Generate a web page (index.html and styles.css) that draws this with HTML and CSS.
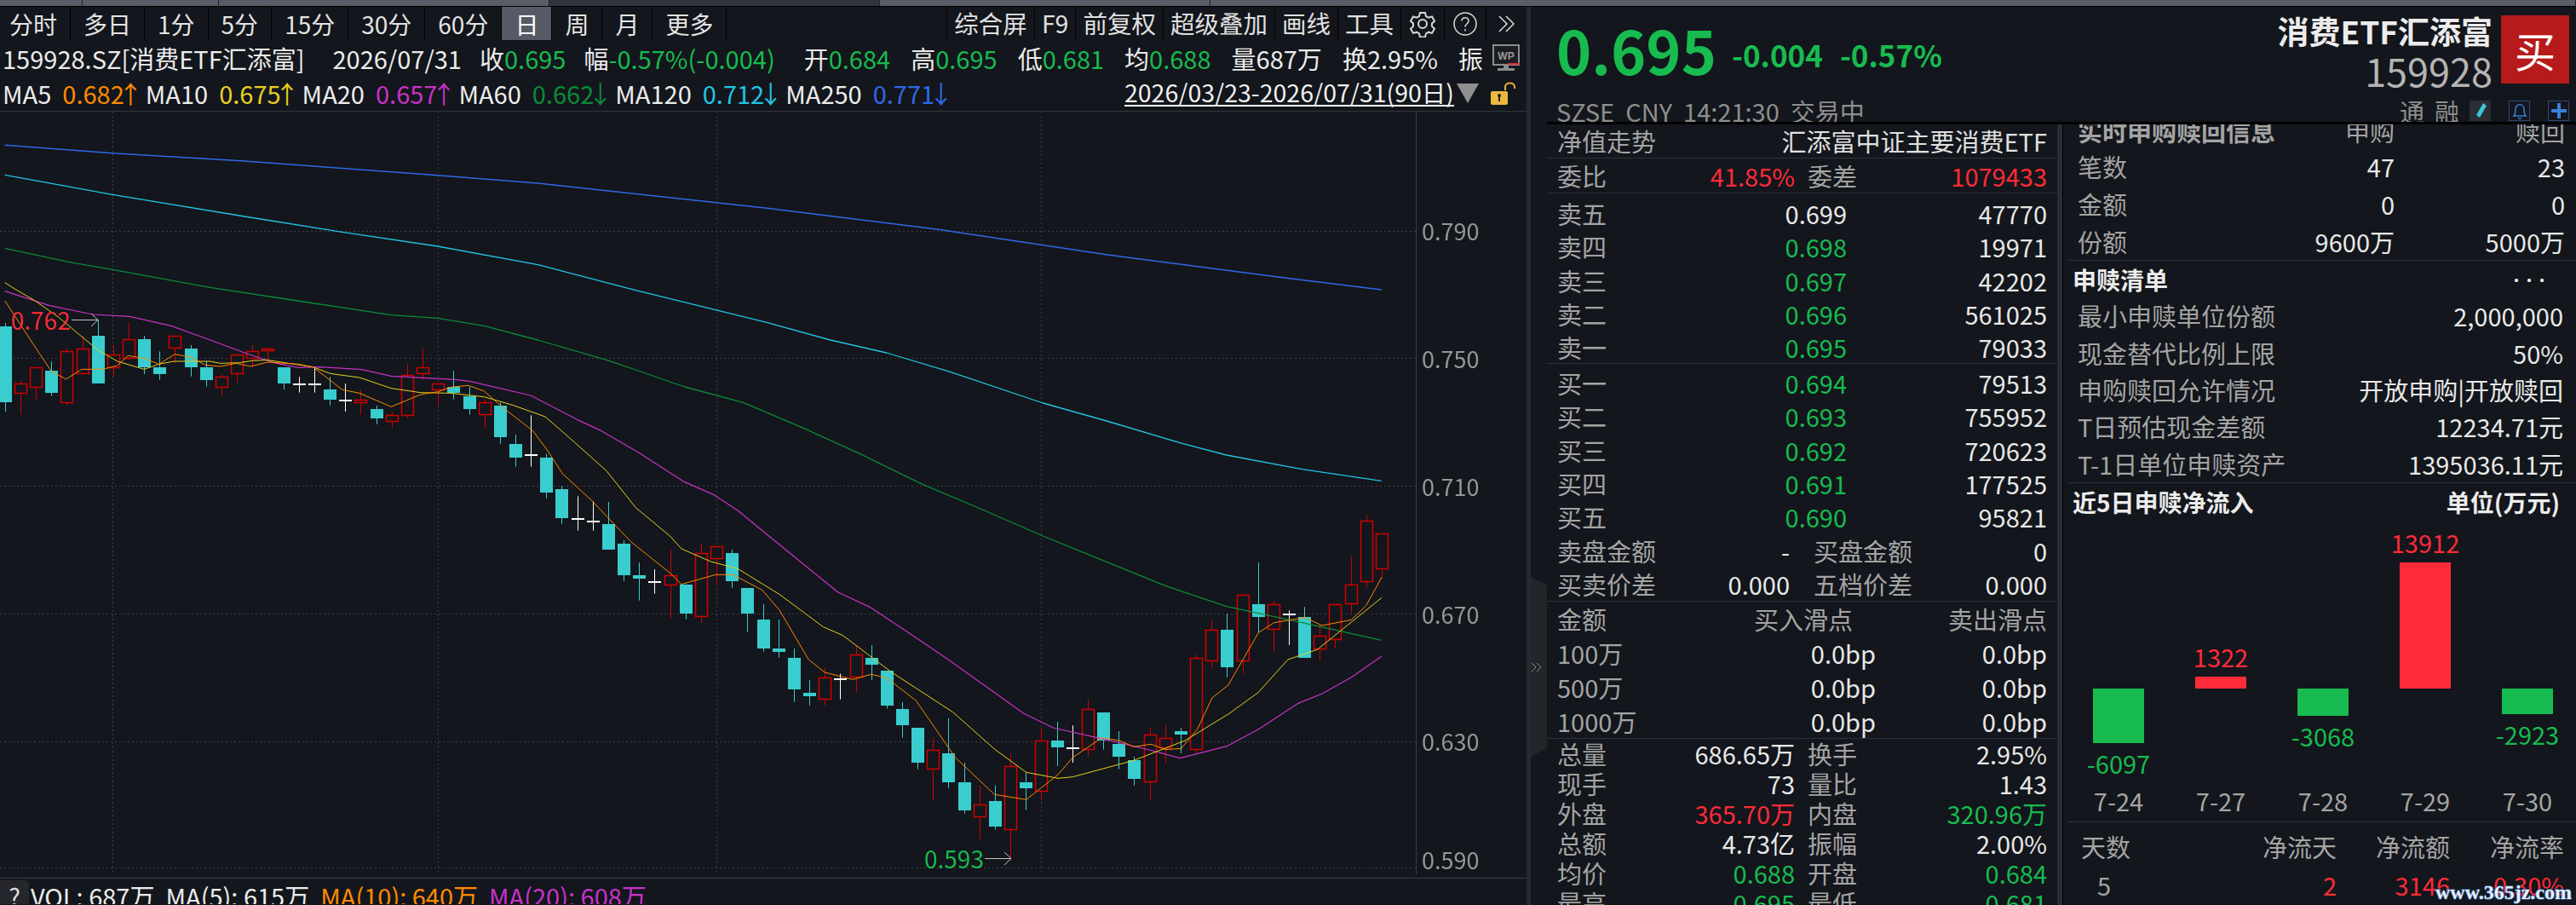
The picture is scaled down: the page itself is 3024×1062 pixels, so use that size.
FILE: index.html
```html
<!DOCTYPE html>
<html lang="zh-CN">
<head>
    <meta charset="UTF-8">
    <title>159928 消费ETF汇添富</title>
    <link rel="stylesheet" href="styles.css">
</head>
<body>
    <div class="top-strip">
        <div class="strip-seg seg-a"></div>
        <div class="strip-seg seg-b"></div>
        <div class="strip-seg seg-c"></div>
        <div class="strip-seg seg-d"></div>
        <div class="strip-seg seg-e"></div>
        <div class="strip-seg seg-f"></div>
    </div>

    <div class="app">
        <!-- K线区 -->
        <section class="chart-pane">
            <div class="toolbar">
                <div class="tabs">
                    <span class="tab first">分时</span>
                    <span class="tab">多日</span>
                    <span class="tab">1分</span>
                    <span class="tab">5分</span>
                    <span class="tab">15分</span>
                    <span class="tab">30分</span>
                    <span class="tab">60分</span>
                    <span class="tab active">日</span>
                    <span class="tab">周</span>
                    <span class="tab">月</span>
                    <span class="tab">更多</span>
                </div>
                <div class="tools">
                    <span class="tool">综合屏</span>
                    <span class="tool">F9</span>
                    <span class="tool">前复权</span>
                    <span class="tool">超级叠加</span>
                    <span class="tool">画线</span>
                    <span class="tool">工具</span>
                    <span class="tool icon">
                        <svg width="32" height="32" viewBox="0 0 32 32" fill="none" stroke="#d8d8d8" stroke-width="2">
                            <path d="M13 3h6l1 4 3 1.700 4-1.200 3 5.200-3 2.800v3.400l3 2.800-3 5.200-4-1.200-3 1.700-1 4h-6l-1-4-3-1.700-4 1.200-3-5.200 3-2.800v-3.400l-3-2.800 3-5.200 4 1.200 3-1.700z"/>
                            <circle cx="16" cy="16" r="5"/>
                        </svg>
                    </span>
                    <span class="tool icon">
                        <svg width="30" height="30" viewBox="0 0 30 30" fill="none" stroke="#d8d8d8" stroke-width="1.500">
                            <circle cx="15" cy="15" r="13"/>
                            <path d="M11 11.500c0-5 8-5 8 0 0 3.500-4 3.500-4 7"/>
                            <path d="M15 21v2.500"/>
                        </svg>
                    </span>
                    <span class="tool icon last">
                        <svg width="24" height="24" viewBox="0 0 24 24" fill="none" stroke="#d8d8d8" stroke-width="1.500">
                            <path d="M3 3l9 9-9 9M11 3l9 9-9 9"/>
                        </svg>
                    </span>
                </div>
            </div>

            <div class="info-row">
                <span>159928.SZ[消费ETF汇添富]</span>
                <span class="info-date">2026/07/31</span>
                <span>收<b class="green">0.695</b></span>
                <span>幅<b class="green">-0.57%(-0.004)</b></span>
                <span class="info-open">开<b class="green">0.684</b></span>
                <span class="info-wide">高<b class="green">0.695</b></span>
                <span class="info-wide">低<b class="green">0.681</b></span>
                <span class="info-wide">均<b class="green">0.688</b></span>
                <span class="info-wide">量<b>687万</b></span>
                <span class="info-wide">换<b>2.95%</b></span>
                <span class="info-wide">振</span>
                <svg class="wp-icon" width="32" height="32" viewBox="0 0 32 32">
                    <rect x="1" y="1" width="30" height="23" fill="#1b1d22" stroke="#8c8c8c" stroke-width="2"/>
                    <text x="16" y="18" class="wp-text">WP</text>
                    <rect x="13" y="24" width="6" height="4" fill="#8c8c8c"/>
                    <rect x="6" y="28" width="20" height="3" fill="#8c8c8c"/>
                    <rect x="18" y="22" width="14" height="2" fill="#e03030"/>
                </svg>
            </div>

            <div class="ma-row">
                <span class="ma">MA5<b class="orange">0.682<i>↑</i></b></span>
                <span class="ma">MA10<b class="yellow">0.675<i>↑</i></b></span>
                <span class="ma">MA20<b class="magenta">0.657<i>↑</i></b></span>
                <span class="ma">MA60<b class="dark-green">0.662<i>↓</i></b></span>
                <span class="ma">MA120<b class="cyan">0.712<i>↓</i></b></span>
                <span class="ma">MA250<b class="blue">0.771<i>↓</i></b></span>
                <span class="range">2026/03/23-2026/07/31(90日)</span>
                <span class="range-arrow"></span>
                <svg class="lock" width="32" height="28" viewBox="0 0 32 28">
                    <path d="M17 10V6c0-6 11-6 11 0v2" fill="none" stroke="#e8b040" stroke-width="2"/>
                    <rect x="0" y="11" width="20" height="16" rx="2" fill="#edb83f"/>
                    <rect x="9" y="15" width="2" height="8" fill="#222"/>
                    <circle cx="10" cy="16" r="2" fill="#222"/>
                </svg>
            </div>

            <div class="chart">
                <canvas id="kline" width="1792" height="899"></canvas>
                <span class="axis-label l790">0.790</span>
                <span class="axis-label l750">0.750</span>
                <span class="axis-label l710">0.710</span>
                <span class="axis-label l670">0.670</span>
                <span class="axis-label l630">0.630</span>
                <span class="axis-label l590">0.590</span>
                <span class="mark high-mark">0.762</span>
                <span class="mark low-mark">0.593</span>
            </div>

            <div class="vol-row">
                <span class="vol-tab">?</span>
                <span class="vol-item">VOL: 687万</span>
                <span class="vol-item">MA(5): 615万</span>
                <span class="vol-item orange">MA(10): 640万</span>
                <span class="vol-item magenta">MA(20): 608万</span>
            </div>
        </section>

        <div class="rail">
            <div class="rail-handle">
                <svg width="14" height="14" viewBox="0 0 14 14" fill="none" stroke="#8a8a8a" stroke-width="1">
                    <path d="M1 2l5 5-5 5M7 2l5 5-5 5"/>
                </svg>
            </div>
        </div>

        <!-- 报价区 -->
        <section class="quote-pane">
            <header class="quote-head">
                <div class="head-top">
                    <span class="last-price">0.695</span>
                    <span class="change">-0.004</span>
                    <span class="change">-0.57%</span>
                    <div class="name-box">
                        <span class="stock-name">消费ETF汇添富</span>
                        <span class="stock-code">159928</span>
                    </div>
                    <span class="buy-btn">买</span>
                </div>
                <div class="head-bottom">
                    <span>SZSE</span>
                    <span>CNY</span>
                    <span>14:21:30</span>
                    <span>交易中</span>
                    <span class="head-flags">通</span>
                    <span class="head-flags flag-b">融</span>
                    <span class="mini pen">
                        <svg width="16" height="22" viewBox="0 0 16 22"><path d="M11 2l4 3-8 14-4-3z" fill="#3ac6d6"/></svg>
                    </span>
                    <span class="mini boxed">
                        <svg width="20" height="24" viewBox="0 0 20 24" fill="none" stroke="#3a80d8" stroke-width="1.500">
                            <path d="M3 18c2-2 2-4 2-8 0-7 10-7 10 0 0 4 0 6 2 8z"/><path d="M8 21h4"/>
                        </svg>
                    </span>
                    <span class="mini boxed">
                        <svg width="20" height="20" viewBox="0 0 20 20"><path d="M8 1h4v7h7v4h-7v7H8v-7H1V8h7z" fill="#3a80d8"/></svg>
                    </span>
                </div>
            </header>

            <div class="quote-body">
                <div class="book">
                    <div class="row head-row line">
                        <span class="label">净值走势</span>
                        <span class="value">汇添富中证主要消费ETF</span>
                    </div>
                    <div class="row pair line">
                        <span class="label">委比</span><span class="num red">41.85%</span>
                        <span class="label sub">委差</span><span class="num red">1079433</span>
                    </div>

                    <div class="levels line">
                        <div class="row level"><span class="label">卖五</span><span class="num">0.699</span><span class="num">47770</span></div>
                        <div class="row level"><span class="label">卖四</span><span class="num green">0.698</span><span class="num">19971</span></div>
                        <div class="row level"><span class="label">卖三</span><span class="num green">0.697</span><span class="num">42202</span></div>
                        <div class="row level"><span class="label">卖二</span><span class="num green">0.696</span><span class="num">561025</span></div>
                        <div class="row level"><span class="label">卖一</span><span class="num green">0.695</span><span class="num">79033</span></div>
                    </div>
                    <div class="levels buy">
                        <div class="row level"><span class="label">买一</span><span class="num green">0.694</span><span class="num">79513</span></div>
                        <div class="row level"><span class="label">买二</span><span class="num green">0.693</span><span class="num">755952</span></div>
                        <div class="row level"><span class="label">买三</span><span class="num green">0.692</span><span class="num">720623</span></div>
                        <div class="row level"><span class="label">买四</span><span class="num green">0.691</span><span class="num">177525</span></div>
                        <div class="row level"><span class="label">买五</span><span class="num green">0.690</span><span class="num">95821</span></div>
                    </div>

                    <div class="amounts line">
                        <div class="row amount"><span class="label">卖盘金额</span><span class="num">-</span><span class="label sub">买盘金额</span><span class="num">0</span></div>
                        <div class="row amount"><span class="label">买卖价差</span><span class="num">0.000</span><span class="label sub">五档价差</span><span class="num">0.000</span></div>
                    </div>

                    <div class="slips line">
                        <div class="row slip"><span class="label">金额</span><span class="label slip-head">买入滑点</span><span class="label slip-end">卖出滑点</span></div>
                        <div class="row slip"><span class="label">100万</span><span class="num">0.0bp</span><span class="num">0.0bp</span></div>
                        <div class="row slip"><span class="label">500万</span><span class="num">0.0bp</span><span class="num">0.0bp</span></div>
                        <div class="row slip"><span class="label">1000万</span><span class="num">0.0bp</span><span class="num">0.0bp</span></div>
                    </div>

                    <div class="stats">
                        <div class="row pair stat"><span class="label">总量</span><span class="num">686.65万</span><span class="label sub">换手</span><span class="num">2.95%</span></div>
                        <div class="row pair stat"><span class="label">现手</span><span class="num">73</span><span class="label sub">量比</span><span class="num">1.43</span></div>
                        <div class="row pair stat"><span class="label">外盘</span><span class="num red">365.70万</span><span class="label sub">内盘</span><span class="num green">320.96万</span></div>
                        <div class="row pair stat"><span class="label">总额</span><span class="num">4.73亿</span><span class="label sub">振幅</span><span class="num">2.00%</span></div>
                        <div class="row pair stat"><span class="label">均价</span><span class="num green">0.688</span><span class="label sub">开盘</span><span class="num green">0.684</span></div>
                        <div class="row pair stat"><span class="label">最高</span><span class="num green">0.695</span><span class="label sub">最低</span><span class="num green">0.681</span></div>
                    </div>
                </div>

                <div class="etf">
                    <div class="creations line">
                        <div class="row flow-row clipped"><span class="label strong">实时申购赎回信息</span><span class="label tar">申购</span><span class="label tar">赎回</span></div>
                        <div class="row flow-row"><span class="label">笔数</span><span class="num">47</span><span class="num">23</span></div>
                        <div class="row flow-row"><span class="label">金额</span><span class="num">0</span><span class="num">0</span></div>
                        <div class="row flow-row"><span class="label">份额</span><span class="num">9600万</span><span class="num">5000万</span></div>
                    </div>

                    <div class="section-title">
                        <span>申赎清单</span>
                        <span class="more">···</span>
                    </div>
                    <div class="list line">
                        <div class="row list-row"><span class="label">最小申赎单位份额</span><span class="num">2,000,000</span></div>
                        <div class="row list-row"><span class="label">现金替代比例上限</span><span class="num">50%</span></div>
                        <div class="row list-row"><span class="label">申购赎回允许情况</span><span class="num">开放申购|开放赎回</span></div>
                        <div class="row list-row"><span class="label">T日预估现金差额</span><span class="num">12234.71元</span></div>
                        <div class="row list-row"><span class="label">T-1日单位申赎资产</span><span class="num">1395036.11元</span></div>
                    </div>

                    <div class="section-title">
                        <span>近5日申赎净流入</span>
                        <span class="unit">单位(万元)</span>
                    </div>
                    <div class="flow-chart line">
                        <div class="flow-col">
                            <div class="flow-up"></div>
                            <div class="flow-down"><i class="bar down h64"></i><span class="green">-6097</span></div>
                            <span class="flow-date">7-24</span>
                        </div>
                        <div class="flow-col">
                            <div class="flow-up"><span class="red">1322</span><i class="bar up h14"></i></div>
                            <div class="flow-down"></div>
                            <span class="flow-date">7-27</span>
                        </div>
                        <div class="flow-col">
                            <div class="flow-up"></div>
                            <div class="flow-down"><i class="bar down h32"></i><span class="green">-3068</span></div>
                            <span class="flow-date">7-28</span>
                        </div>
                        <div class="flow-col">
                            <div class="flow-up"><span class="red">13912</span><i class="bar up h148"></i></div>
                            <div class="flow-down"></div>
                            <span class="flow-date">7-29</span>
                        </div>
                        <div class="flow-col">
                            <div class="flow-up"></div>
                            <div class="flow-down"><i class="bar down h30"></i><span class="green">-2923</span></div>
                            <span class="flow-date">7-30</span>
                        </div>
                    </div>

                    <div class="summary">
                        <span class="label days">天数</span>
                        <span class="label tar">净流天</span>
                        <span class="label tar">净流额</span>
                        <span class="label tar">净流率</span>
                        <span class="label days-value">5</span>
                        <span class="red tar">2</span>
                        <span class="red tar">3146</span>
                        <span class="red tar">0.30%</span>
                    </div>
                </div>
            </div>
        </section>
    </div>

    <span class="watermark">www.365jz.com</span>

    <script src="chart.js"></script>
</body>
</html>
```

FILE: styles.css
```css
* {
    margin: 0;
    padding: 0;
    box-sizing: border-box;
}

html, body {
    height: 100%;
    overflow: hidden;
}

body {
    position: relative;
    background-color: #13161c;
    color: #ececec;
    font-family: "Noto Sans CJK SC", "Noto Sans", sans-serif;
    font-size: 29px;
    line-height: 1;
}

b {
    font-weight: 400;
}

.green { color: #17bb4f; }
.red { color: #fe2b38; }
.orange { color: #ff8a00; }
.yellow { color: #e8d020; }
.magenta { color: #c832c8; }
.dark-green { color: #0c8a3a; }
.cyan { color: #22c4e4; }
.blue { color: #3068e8; }

.top-strip {
    display: flex;
    height: 8px;
    border-bottom: 1px solid #000;
}

.strip-seg {
    height: 7px;
    background-color: #585e68;
    border-right: 1px solid #20232a;
}

.seg-a { width: 97px; }
.seg-b { width: 160px; }
.seg-c { width: 388px; }
.seg-d { width: 388px; background-color: #30343b; }
.seg-e { width: 388px; }
.seg-f { flex: 1; }

.app {
    display: flex;
    height: 1054px;
}

/* K线区 */
.chart-pane {
    width: 1797px;
    border-right: 5px solid #26292f;
    display: flex;
    flex-direction: column;
    overflow: hidden;
}

.chart-pane > * {
    flex-shrink: 0;
}

.toolbar {
    display: flex;
    justify-content: space-between;
    height: 39px;
}

.tabs, .tools {
    display: flex;
}

.tab {
    display: flex;
    align-items: center;
    padding: 0 15px;
    border-right: 1px solid #000;
    color: #e4e4e4;
    font-size: 28px;
}

.tab.first {
    padding: 0 15px 0 11px;
}

.tab.active {
    background-color: #565a66;
    color: #fff;
}

.tool {
    display: flex;
    align-items: center;
    padding: 0 8px;
    border-left: 1px solid #000;
    color: #e0e0e0;
    font-size: 28.500px;
}

.tool.icon {
    padding: 0 9px;
}

.tool.last {
    padding: 0 11px 0 12px;
}

.info-row {
    display: flex;
    align-items: center;
    gap: 21px;
    height: 42px;
    padding-left: 3px;
    white-space: nowrap;
}

.info-date {
    margin-left: 12px;
}

.info-open {
    margin-left: 13px;
}

.info-wide {
    margin-left: 3px;
}

.wp-icon {
    margin-left: -10px;
    flex-shrink: 0;
}

.wp-text {
    fill: #9a9a9a;
    font-family: "Liberation Sans", sans-serif;
    font-size: 12px;
    font-weight: 700;
    text-anchor: middle;
}

.ma-row {
    display: flex;
    align-items: center;
    gap: 11px;
    height: 42px;
    padding: 0 10px 0 3px;
    border-bottom: 1px solid #33363c;
    white-space: nowrap;
}

.ma b {
    margin-left: 13px;
}

.ma i {
    margin: 0 -8px 0 -7px;
    font-style: normal;
}

.range {
    margin-left: auto;
    border-bottom: 2px solid #fff;
    color: #f0f0f0;
    font-size: 28.500px;
}

.range-arrow {
    margin-left: -8px;
    width: 0;
    height: 0;
    border-left: 13px solid transparent;
    border-right: 13px solid transparent;
    border-top: 23px solid #8f8f8f;
}

.lock {
    margin-left: 3px;
    flex-shrink: 0;
}

.chart {
    position: relative;
    height: 899px;
}

#kline {
    display: block;
}

.axis-label {
    position: absolute;
    left: 1669px;
    color: #969696;
    font-size: 27px;
}

.l790 { top: 126px; }
.l750 { top: 276px; }
.l710 { top: 426px; }
.l670 { top: 576px; }
.l630 { top: 725px; }
.l590 { top: 864px; }

.mark {
    position: absolute;
    font-size: 28px;
}

.high-mark {
    left: 13px;
    top: 230px;
    color: #fe2b38;
}

.low-mark {
    left: 1085px;
    top: 862px;
    color: #17bb4f;
}

.vol-row {
    display: flex;
    align-items: flex-start;
    gap: 13px;
    height: 31px;
    border-top: 1px solid #3a3d44;
    white-space: nowrap;
    overflow: hidden;
}

.vol-tab {
    flex-shrink: 0;
    width: 34px;
    height: 30px;
    margin: 2px -11px 0 0;
    padding-top: 4px;
    background-color: #25272d;
    border-radius: 0 6px 0 0;
    color: #ddd;
    text-align: center;
}

.vol-item {
    margin-top: 6px;
}

/* 报价区 */
.rail {
    width: 19px;
    padding-top: 669px;
}

.rail-handle {
    display: flex;
    align-items: center;
    height: 211px;
    background-color: #24252b;
    clip-path: polygon(0 0, 100% 10px, 100% 201px, 0 100%);
}

.quote-pane {
    flex: 1;
    display: flex;
    flex-direction: column;
    min-width: 0;
}

.quote-head {
    flex-shrink: 0;
    height: 138px;
    border-bottom: 3px solid #000;
    padding-left: 11px;
}

.head-top {
    display: flex;
    align-items: center;
    height: 100px;
}

.last-price {
    color: #17bb4f;
    font-size: 70px;
    font-weight: 700;
    margin-right: 18px;
}

.change {
    color: #17bb4f;
    font-size: 35px;
    font-weight: 700;
    margin-right: 20px;
    padding-top: 10px;
}

.name-box {
    display: flex;
    flex-direction: column;
    align-items: flex-end;
    gap: 5px;
    margin-left: auto;
    padding-top: 6px;
}

.stock-name {
    font-size: 37px;
    font-weight: 700;
}

.stock-code {
    color: #b4b4b4;
    font-size: 45px;
}

.buy-btn {
    display: flex;
    align-items: center;
    justify-content: center;
    width: 80px;
    height: 80px;
    margin: 0 8px 0 10px;
    background-color: #b71a1a;
    color: #fff;
    font-size: 48px;
}

.head-bottom {
    display: flex;
    align-items: center;
    gap: 13px;
    height: 35px;
    padding-top: 9px;
    color: #8e8e8e;
    overflow: hidden;
}

.head-flags {
    margin-left: auto;
}

.flag-b {
    margin-left: -1px;
}

.mini {
    display: flex;
    align-items: center;
    justify-content: center;
    width: 25px;
    height: 24px;
    margin-left: -1px;
}

.mini.pen {
    background-color: #2a2d33;
}

.mini.boxed {
    margin-left: 8px;
    border: 1px solid #2c4a78;
}

.mini:last-child {
    margin-right: 8px;
}

.quote-body {
    flex: 1;
    display: flex;
    overflow: hidden;
}

.book {
    width: 600px;
    border-right: 1px solid #25282e;
}

.line {
    border-bottom: 1px solid #2e3137;
}

.row {
    display: grid;
    align-items: center;
    padding: 0 12px;
    white-space: nowrap;
}

.label {
    color: #a4a4a4;
}

.num, .value {
    color: #e8e8e8;
    text-align: right;
}

.num.green { color: #17bb4f; }
.num.red { color: #fe2b38; }

.head-row {
    grid-template-columns: 1fr auto;
    height: 40px;
}

.head-row .value {
    color: #e0e0e0;
}

.pair {
    grid-template-columns: 70px 209px 90px 1fr;
    height: 41px;
}

.sub {
    padding-left: 15px;
}

.levels.line {
    padding-top: 4px;
    height: 200px;
}

.levels.buy {
    padding-top: 3px;
}

.level {
    grid-template-columns: 100px 240px 1fr;
    height: 39.300px;
}

.amount {
    grid-template-columns: 118px 155px 146px 1fr;
    height: 39.500px;
}

.amount .sub {
    padding-left: 28px;
}

.slip {
    grid-template-columns: 150px 224px 1fr;
    height: 40px;
}

.slip-head {
    padding-right: 27px;
    text-align: right;
}

.slip-end {
    text-align: right;
}

.stat {
    height: 35px;
}

.etf {
    flex: 1;
    padding-left: 6px;
    border-left: 5px solid #2a2d33;
    box-shadow: inset 1px 0 0 #000;
    min-width: 0;
}

.creations {
    display: flow-root;
    height: 160px;
}

.flow-row {
    grid-template-columns: 172px 200px 200px;
    height: 44px;
}

.flow-row.clipped {
    height: 40px;
    margin-top: -13px;
}

.strong {
    font-weight: 700;
}

.tar {
    text-align: right;
}

.section-title {
    display: flex;
    justify-content: space-between;
    align-items: center;
    height: 43px;
    padding: 0 19px 0 6px;
    color: #ececec;
    font-size: 28px;
    font-weight: 700;
    white-space: nowrap;
}

.more {
    padding-right: 14px;
    font-size: 16px;
    font-weight: 700;
    letter-spacing: -1px;
}

.list {
    height: 218px;
    display: flex;
    flex-direction: column;
}

.list-row {
    flex: 1;
    grid-template-columns: 1fr auto;
    padding-right: 15px;
}

.flow-chart {
    display: grid;
    grid-template-columns: repeat(5, 120px);
    height: 355px;
}

.flow-col {
    display: flex;
    flex-direction: column;
    align-items: center;
}

.flow-up {
    display: flex;
    flex-direction: column;
    align-items: center;
    justify-content: flex-end;
    gap: 9px;
    height: 198px;
}

.flow-down {
    display: flex;
    flex-direction: column;
    align-items: center;
    gap: 9px;
    height: 116px;
}

.bar {
    display: block;
    width: 60px;
}

.bar.up { background-color: #fe2b38; }
.bar.down { background-color: #17bb4f; }
.h14 { height: 14px; }
.h30 { height: 30px; }
.h32 { height: 32px; }
.h64 { height: 64px; }
.h148 { height: 148px; }

.flow-date {
    color: #a4a4a4;
    margin-top: 1px;
}

.summary {
    display: grid;
    grid-template-columns: 216px 100px 133px 134px;
    grid-auto-rows: 45px;
    align-items: center;
    padding-top: 6px;
}

.days {
    padding-left: 16px;
}

.days-value {
    padding-left: 35px;
}

.watermark {
    position: absolute;
    right: 5px;
    bottom: 3px;
    color: #e8eef6;
    font-family: "Liberation Serif", serif;
    font-size: 24px;
    font-weight: 700;
    text-shadow: -1px 0 #2a5590, 1px 0 #2a5590, 0 -1px #2a5590, 0 1px #2a5590;
}
```

FILE: chart.js
```js
// 日K线: [类型, 最高, 开收上沿, 开收下沿, 最低]  r红 t青 w十字
const firstPart = [
    ['t', 120, 132, 398, 432], ['r', 322, 334, 365, 443], ['r', 277, 277, 344, 389], ['t', 255, 288, 365, 377],
    ['r', 210, 220, 398, 410], ['r', 165, 211, 298, 298], ['t', 108, 165, 332, 332], ['r', 197, 232, 275, 310],
    ['r', 120, 178, 242, 250], ['t', 165, 177, 276, 300], ['t', 220, 276, 300, 320], ['r', 166, 166, 208, 262],
    ['t', 198, 210, 276, 308], ['t', 255, 276, 320, 344], ['r', 300, 310, 344, 377], ['r', 232, 232, 298, 332],
    ['r', 198, 220, 242, 275], ['r', 211, 211, 217, 255], ['t', 276, 276, 332, 354], ['w', 310, 334, 334, 365],
    ['w', 276, 334, 334, 365], ['t', 310, 354, 389, 410], ['w', 333, 391, 391, 432], ['r', 354, 391, 398, 443],
    ['t', 411, 423, 455, 477], ['r', 433, 445, 466, 488], ['r', 265, 302, 443, 455], ['r', 210, 277, 298, 320],
    ['r', 334, 334, 353, 410], ['t', 288, 345, 365, 389], ['t', 345, 377, 422, 443], ['r', 390, 400, 442, 488],
    ['t', 400, 411, 521, 545], ['t', 513, 546, 593, 626], ['w', 445, 582, 582, 626], ['t', 582, 594, 716, 737],
    ['t', 694, 705, 806, 828], ['w', 730, 807, 807, 851], ['w', 748, 817, 817, 851], ['t', 750, 828, 917, 917],
    ['t', 885, 897, 1007, 1028], ['t', 963, 1007, 1019, 1097], ['w', 987, 1029, 1029, 1073], ['r', 918, 1009, 1040, 1162],
    ['t', 1040, 1041, 1142, 1163], ['r', 897, 931, 1153, 1175], ['r', 907, 907, 949, 1043], ['t', 918, 930, 1028, 1052]
];
const secondPart = [
    ['t', 273, 273, 362, 428], ['t', 330, 384, 485, 497], ['t', 384, 486, 497, 518], ['t', 486, 519, 629, 674],
    ['t', 597, 642, 653, 686], ['r', 553, 589, 664, 686], ['w', 575, 590, 590, 665], ['r', 474, 508, 586, 641],
    ['t', 474, 519, 542, 597], ['t', 564, 564, 686, 697], ['t', 675, 699, 755, 800], ['t', 765, 765, 887, 911],
    ['r', 800, 844, 910, 1022], ['t', 732, 855, 956, 977], ['t', 888, 957, 1055, 1067], ['r', 968, 1036, 1078, 1157],
    ['t', 968, 1023, 1112, 1124], ['r', 855, 901, 1123, 1222], ['t', 923, 957, 977, 1055], ['r', 765, 811, 988, 1022],
    ['t', 744, 810, 833, 900], ['w', 757, 834, 834, 888], ['r', 665, 700, 841, 866], ['t', 711, 711, 810, 842],
    ['t', 777, 822, 866, 911], ['t', 867, 879, 944, 968], ['r', 765, 790, 955, 1022], ['r', 755, 802, 833, 887],
    ['t', 765, 777, 789, 855], ['r', 508, 520, 841, 857], ['r', 385, 421, 529, 552], ['t', 363, 420, 551, 587],
    ['r', 295, 296, 529, 575], ['t', 183, 330, 375, 430], ['r', 318, 331, 418, 497], ['w', 352, 364, 364, 474],
    ['t', 340, 375, 518, 518], ['r', 400, 442, 485, 530], ['r', 330, 331, 452, 485], ['r', 163, 262, 328, 360],
    ['r', 15, 37, 248, 272], ['r', 82, 82, 205, 240]
];

const X_SCALE = 1.742;
const TOP = 132;

// 把取样坐标换算成画布坐标
function pts(ox, oy, list) {
    return list.map(([x, y]) => [ox + x / X_SCALE, oy + y / 3 - TOP]);
}

const lines = [
    {
        color: '#3068e8', width: 1.5,
        points: pts(0, 140, [[10, 94], [230, 122], [500, 150], [895, 200], [1100, 228], [1568, 316], [1916, 390], [2265, 480], [2613, 558], [2825, 603]])
    },
    {
        color: '#22c4e4', width: 1.3,
        points: [
            ...pts(0, 140, [[10, 199], [230, 268], [500, 345], [700, 400], [895, 450], [1100, 515], [1300, 605], [1568, 718]]),
            ...pts(880, 400, [[165, 0], [280, 45], [410, 112], [600, 222], [730, 285], [880, 362], [975, 405], [1130, 455], [1292, 496]])
        ]
    },
    {
        color: '#0c8a3a', width: 1.3,
        points: [
            ...pts(0, 140, [[10, 457], [140, 505], [230, 532], [430, 595], [620, 645], [800, 692], [895, 703], [990, 730], [1100, 780], [1240, 850]]),
            ...pts(0, 340, [[1300, 285], [1400, 345], [1520, 400]]),
            ...pts(880, 400, [[110, 310], [225, 400], [350, 505], [480, 600], [600, 690], [700, 760], [850, 865], [975, 938], [1130, 995], [1292, 1057]])
        ]
    },
    {
        color: '#c832c8', width: 1.2,
        points: [
            ...pts(0, 340, [[10, 8], [100, 58], [190, 90], [265, 97], [350, 130], [430, 180], [500, 225], [560, 260], [610, 277], [655, 275], [740, 284], [800, 307], [930, 319], [960, 325], [1085, 375], [1180, 460], [1230, 500], [1305, 575], [1400, 680], [1460, 725]]),
            ...pts(800, 600, [[115, 0], [200, 120], [320, 288], [385, 340], [460, 425], [550, 530], [700, 715], [760, 765], [850, 800], [950, 840], [1020, 872], [1115, 830], [1180, 770], [1260, 680], [1310, 645], [1370, 587], [1432, 513]])
        ]
    },
    {
        color: '#e8d020', width: 1,
        points: [
            ...pts(0, 340, [[10, -22], [30, 0], [70, 40], [120, 100], [165, 165], [200, 215], [240, 255], [295, 283], [325, 265], [355, 255], [430, 255], [450, 262], [490, 260], [515, 253], [545, 250], [610, 267], [640, 275], [675, 298], [735, 312], [800, 350], [860, 365], [920, 367], [990, 380], [1050, 410], [1115, 450], [1165, 525], [1240, 640], [1300, 770], [1370, 870]]),
            ...pts(800, 600, [[0, 135], [60, 180], [115, 205], [200, 295], [290, 410], [330, 440], [430, 570], [555, 710], [640, 840], [705, 922], [770, 943], [800, 938], [925, 880], [1030, 810], [1120, 715], [1180, 640], [1240, 525], [1300, 490], [1432, 307]])
        ]
    },
    {
        color: '#ff8a00', width: 1,
        points: [
            ...pts(0, 340, [[10, 42], [70, 200], [105, 290], [135, 318], [167, 283], [210, 283], [240, 270], [262, 235], [295, 245], [325, 265], [357, 230], [390, 240], [420, 268], [450, 273], [483, 262], [512, 273], [547, 258], [610, 265], [640, 275], [700, 355], [735, 367], [800, 415], [860, 372], [895, 362], [925, 345], [958, 340], [990, 360], [1030, 420], [1090, 500], [1120, 570], [1150, 650], [1210, 745], [1290, 890], [1370, 1000]]),
            ...pts(800, 600, [[0, 260], [70, 226], [105, 226], [165, 280], [200, 350], [260, 525], [293, 570], [350, 595], [388, 577], [420, 590], [480, 670], [560, 870], [640, 1000], [705, 1018], [770, 930], [800, 870], [860, 800], [895, 810], [925, 832], [960, 823], [990, 842], [1022, 838], [1055, 770], [1085, 660], [1118, 615], [1180, 430], [1212, 395], [1275, 377], [1310, 405], [1370, 385], [1400, 335], [1432, 235]])
        ]
    }
];

const BG = '#13161c';
const canvas = document.getElementById('kline');
const ctx = canvas.getContext('2d');

function segment(x1, y1, x2, y2) {
    ctx.beginPath();
    ctx.moveTo(x1, y1);
    ctx.lineTo(x2, y2);
    ctx.stroke();
}

function drawGrid() {
    ctx.strokeStyle = '#3c3f45';
    ctx.lineWidth = 1;
    ctx.setLineDash([2, 3]);
    [272, 421, 571, 721, 871, 1019].forEach(y => segment(0, y - TOP + 0.5, 1662, y - TOP + 0.5));
    [132, 514, 841, 1222].forEach(x => segment(x + 0.5, 0, x + 0.5, 895));
    ctx.setLineDash([]);
    ctx.strokeStyle = '#3a3d44';
    segment(1662.5, 0, 1662.5, 895);
}

function drawCandle(i, [type, high, top, bottom, low], oy) {
    const x = Math.round(5.7 + i * 18.16);
    const yHigh = oy + high / 3 - TOP;
    const yTop = Math.round(oy + top / 3 - TOP);
    const yBottom = Math.round(oy + bottom / 3 - TOP);
    const yLow = oy + low / 3 - TOP;
    const colors = { r: '#d00000', t: '#39cdcf', w: '#ffffff' };

    ctx.strokeStyle = colors[type];
    ctx.lineWidth = 1;
    segment(x + 0.5, yHigh, x + 0.5, yLow);

    if (type === 't') {
        ctx.fillStyle = colors.t;
        ctx.fillRect(x - 7, yTop, 15, yBottom - yTop);
    } else if (type === 'r') {
        ctx.fillStyle = BG;
        ctx.fillRect(x - 7, yTop, 14, yBottom - yTop);
        ctx.lineWidth = 1.5;
        ctx.strokeRect(x - 6.5, yTop + 0.5, 14, yBottom - yTop);
    } else {
        ctx.fillStyle = colors.w;
        ctx.fillRect(x - 7, yTop, 15, 2);
    }
}

function drawLine({ color, width, points }) {
    ctx.strokeStyle = color;
    ctx.lineWidth = width;
    ctx.lineJoin = 'round';
    ctx.beginPath();
    points.forEach(([x, y], i) => (i ? ctx.lineTo(x, y) : ctx.moveTo(x, y)));
    ctx.stroke();
}

function drawArrow(x1, x2, y) {
    ctx.strokeStyle = '#c4c4c4';
    ctx.lineWidth = 1;
    segment(x1, y + 0.5, x2, y + 0.5);
    segment(x2 - 8, y - 7, x2, y + 0.5);
    segment(x2 - 8, y + 8, x2, y + 0.5);
}

drawGrid();
firstPart.forEach((c, i) => drawCandle(i, c, 340));
secondPart.forEach((c, i) => drawCandle(i + firstPart.length, c, 600));
lines.forEach(drawLine);
drawArrow(84, 115, 376 - TOP);
drawArrow(1156, 1187, 1008 - TOP);
```
